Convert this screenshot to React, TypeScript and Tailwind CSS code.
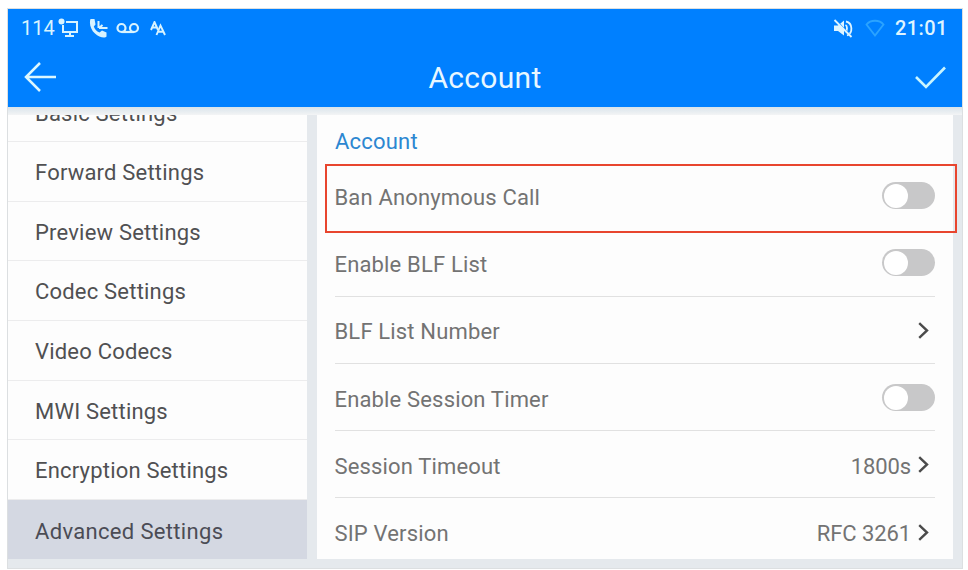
import React from "react";

const menu = [
  "Forward Settings",
  "Preview Settings",
  "Codec Settings",
  "Video Codecs",
  "MWI Settings",
  "Encryption Settings",
  "Advanced Settings",
];

type Row = { label: string; kind: "toggle" | "link"; value?: string };

const rows: Row[] = [
  { label: "Ban Anonymous Call", kind: "toggle" },
  { label: "Enable BLF List", kind: "toggle" },
  { label: "BLF List Number", kind: "link" },
  { label: "Enable Session Timer", kind: "toggle" },
  { label: "Session Timeout", kind: "link", value: "1800s" },
  { label: "SIP Version", kind: "link", value: "RFC 3261" },
];

function Toggle() {
  return (
    <div className="mb-[3px] flex h-[27px] w-[53px] items-center rounded-full bg-[#c8c8c9] pl-[2px]">
      <div className="h-[24px] w-[24px] rounded-full bg-white" />
    </div>
  );
}

function Chevron() {
  return (
    <svg className="mb-[3px]" width="11" height="17" viewBox="0 0 11 17" fill="none" stroke="#4b4b4b" strokeWidth="2.4">
      <path d="M1.2 1.2 9 8.500 1.2 15.800" />
    </svg>
  );
}

function StatusBar() {
  return (
    <div className="flex h-[38px] shrink-0 items-center justify-between pl-[13px] pr-[14px]">
      <div className="flex items-center text-[#d8f3ff]">
        <span className="w-[36px] text-[20px] leading-[24px]">114</span>
        <svg className="ml-[1px]" width="21" height="20" viewBox="0 0 21 20" fill="none" stroke="currentColor" strokeWidth="2">
          <path d="M8 4h11v10H5V7M12 14v4M7 18h9" />
          <circle cx="3.5" cy="3.5" r="3" fill="currentColor" stroke="none" />
        </svg>
        <svg className="ml-[10px]" width="19" height="19" viewBox="0 0 19 19" fill="none" stroke="currentColor">
          <path
            d="M1.500 0 5.500 0 6.500 5.500 4.800 7.500C5.500 10 7.500 12.500 10.500 13.500l2.500-2 4.500 2V17.500C16 19.500 10 18.500 6 14.500 1.500 10.500 0 4 1.500 0Z"
            fill="currentColor"
            stroke="none"
          />
          <path d="M9.500 2v7M10 9l3.500-3M10 9h8.500" strokeWidth="2" />
        </svg>
        <svg className="ml-[8px]" width="24" height="12" viewBox="0 0 24 12" fill="none" stroke="currentColor" strokeWidth="2.200">
          <circle cx="5.500" cy="6" r="4" />
          <circle cx="18" cy="6" r="4" />
          <path d="M5.500 10H18" />
        </svg>
        <svg className="ml-[10px]" width="17" height="15" viewBox="0 0 17 15" fill="none" stroke="currentColor" strokeWidth="1.900">
          <path d="M1 9 4.500 1 8 9M2.300 6.500h4.500" />
          <path d="m6.500 14 4-9.500 4.500 9.500M8 10.700h5.500" />
        </svg>
      </div>
      <div className="flex items-center text-[#def4ff]">
        <svg width="21" height="19" viewBox="0 0 21 19" fill="none" stroke="currentColor" strokeWidth="1.800">
          <path d="M1 6.500h4l6-5v15l-6-4.500H1Z" fill="currentColor" stroke="none" />
          <path d="M12.500 6c2 1 2 5 0 7M13 2.500c7 1.500 7 12 1 14" />
          <path d="m3 1 15 16.500" stroke="#0080ff" strokeWidth="1.500" />
          <path d="m1.500 1 17 17" />
        </svg>
        <svg className="ml-[11px]" width="20" height="18" viewBox="0 0 20 18" fill="none" stroke="#2ba3ff" strokeWidth="1.800">
          <path d="M1.500 5.500C5.500.5 14.500.5 18.500 5.500L10 16.500Z" />
        </svg>
        <span className="ml-[10px] w-[53px] whitespace-nowrap text-[20px] font-medium leading-[24px] tracking-[0.400px]">21:01</span>
      </div>
    </div>
  );
}

function TitleBar() {
  return (
    <div className="grid flex-1 grid-cols-[1fr_auto_1fr] items-center pb-[1px] pl-[16px] pr-[16px]">
      <svg width="33" height="32" viewBox="0 0 33 32" fill="none" stroke="#dcf7ff" strokeWidth="2.500">
        <path d="M32 16H2M16 2 2 16l14 14" />
      </svg>
      <h1 className="pt-[2px] text-[30px] leading-[34px] tracking-[0.300px] text-[#e8f7ff]">Account</h1>
      <svg className="mt-[2px] justify-self-end" width="31" height="23" viewBox="0 0 31 23" fill="none" stroke="#c9f5ff" strokeWidth="2.600">
        <path d="m1 11 10 10L30 1.500" />
      </svg>
    </div>
  );
}

export default function App() {
  return (
    <div className="h-[570px] w-[968px] overflow-hidden bg-white pl-[7px] pt-[8px] font-[Roboto,sans-serif]">
      <div className="flex h-[561px] w-[956px] flex-col border border-[#dcdfe1] bg-[#e5e9ed]">
        <header className="flex h-[98px] shrink-0 flex-col bg-[#0080ff]">
          <StatusBar />
          <TitleBar />
        </header>
        <div className="h-[8px] shrink-0 bg-linear-to-b from-[#d9e4eb] to-[#f3f4f5]" />
        <main className="flex h-[444px]">
          <nav className="w-[299px] overflow-hidden bg-[#fdfdfd] text-[22px] tracking-[0.200px] text-[#505052]">
            <div className="h-[27px] overflow-hidden border-b border-[#ececed] pl-[27px]">
              <div className="mt-[-14px] leading-[26px]">Basic Settings</div>
            </div>
            {menu.map((item, i) => (
              <div
                key={item}
                className={
                  i === 6
                    ? "flex h-[59px] items-center bg-[#d4d8e2] pl-[27px] pt-[3px] tracking-[0.330px] text-[#4b4c55]"
                    : "flex h-[59.700px] items-center border-b border-[#ececed] pl-[27px] pt-[2px]"
                }
              >
                {item}
              </div>
            ))}
          </nav>
          <section className="relative ml-[10px] w-[636px] bg-[#fdfdfd] pl-[18px] pr-[18px] text-[22px] text-[#737373]">
            <h2 className="flex h-[47px] items-center pt-[6px] tracking-[0.200px] text-[#2c87d1]">Account</h2>
            {rows.map((row, i) => (
              <div
                key={row.label}
                className={
                  i === 0
                    ? "flex h-[67.300px] items-center justify-between pt-[3px]"
                    : i === 5
                      ? "flex h-[67px] items-center justify-between pt-[4px]"
                      : "flex h-[67.300px] items-center justify-between border-b border-[#e1e1e1] pt-[4px]"
                }
              >
                <span className="ml-[-0.500px] tracking-[0.160px]">{row.label}</span>
                {row.kind === "toggle" ? (
                  <Toggle />
                ) : (
                  <span className="flex items-center gap-[7px] pr-[6px] tracking-[-0.100px]">
                    {row.value}
                    <Chevron />
                  </span>
                )}
              </div>
            ))}
            <div className="absolute left-[8px] top-[49px] h-[69px] w-[632px] border-2 border-[#e8452e]" />
          </section>
        </main>
      </div>
    </div>
  );
}
